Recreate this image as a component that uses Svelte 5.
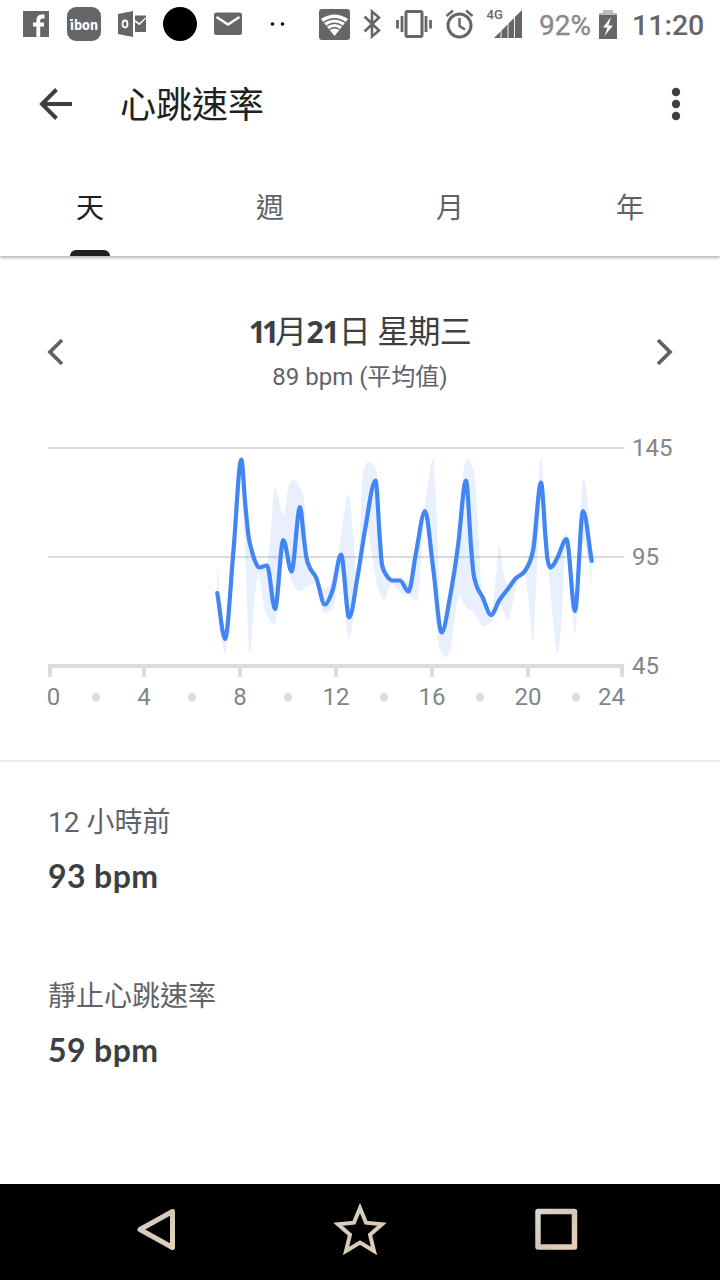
<script>
  const tabs = ['天', '週', '月', '年'];
  const stats = [
    { label: '12 小時前', value: '93 bpm' },
    { label: '靜止心跳速率', value: '59 bpm' }
  ];
  const gridlines = [{ y: 18, label: '145' }, { y: 127, label: '95' }];
  const ticks = [
    { x: 50, tx: 53.5, label: '0' }, { x: 144, tx: 144, label: '4' },
    { x: 240, tx: 240, label: '8' }, { x: 336, tx: 336, label: '12' },
    { x: 432, tx: 432, label: '16' }, { x: 528, tx: 528, label: '20' },
    { x: 622, tx: 611.5, label: '24' }
  ];
  const dots = [96, 192, 288, 384, 480, 576];

  const line = [
    [217.3, 593], [225, 639], [233.5, 550], [241.3, 459.5], [245.3, 505], [248.5, 536], [251.7, 550.5], [255, 561],
    [259, 567.5], [267, 565.5], [275, 609], [283.3, 540], [291.5, 571.5], [300, 507], [304.2, 541], [306.5, 558],
    [309.5, 567], [316.3, 578], [324.7, 604.5], [333, 589], [341, 554.5], [349.2, 617.5], [357.5, 577], [365.5, 527],
    [375.5, 480.5], [379.8, 538], [382, 565], [386.7, 575.7], [392.5, 580.5], [400, 580.5],
    [408.5, 591.5], [416, 553], [425, 511], [433, 567], [441.7, 632.5], [450, 597], [458, 546], [466, 480.5],
    [471, 546], [473.3, 572], [476, 584], [482.5, 597], [491, 615], [499.5, 600], [507.5, 589.5], [516, 578],
    [524.5, 571.5], [533, 551], [541, 482.5], [545.7, 540], [547.5, 559.5], [550.3, 567.7], [554, 564],
    [558, 556.5], [566.5, 539], [575, 611], [583, 511], [591.7, 561]
  ];
  const upper = [
    [217, 564], [225, 635], [233.5, 550], [241.5, 458], [249, 535], [258, 566], [267, 563], [270, 540], [275, 487],
    [283.5, 515], [289, 485], [293, 480], [300, 487], [304, 500], [308, 555], [316, 576], [324.5, 589], [333, 577],
    [340, 543], [344, 515], [348.7, 494], [353, 532], [357, 570], [360, 530], [363, 474], [368, 462], [375, 467],
    [379, 490], [383, 560], [391, 578], [400, 577], [408, 582], [415, 550], [425, 504], [433, 459], [436.7, 515],
    [441.5, 628], [450, 595], [458, 540], [462, 485], [467, 459], [474, 472], [478, 525], [482, 592], [491, 613],
    [495, 587], [499.3, 546], [503, 570], [508, 586], [516, 575], [524, 569], [530, 547], [537, 493], [541, 459],
    [545, 500], [550, 565], [558, 553], [566, 533], [571, 560], [575, 605], [579, 530], [583.5, 479], [588, 505], [591.5, 555]
  ];
  const lower = [
    [217, 597], [225, 654], [233, 560], [241, 470], [245, 548], [250, 654], [254, 606], [258.5, 574], [265, 611],
    [275, 624], [280, 592], [284, 548], [290, 577], [300, 591], [308, 586], [316, 583], [324, 613], [333, 609],
    [340, 570], [349, 639], [357, 590], [366, 525], [371.7, 553], [376.7, 582], [384, 600], [392, 584], [401, 593],
    [409, 596], [417, 601], [420, 577], [425, 520], [433, 570], [436.7, 628], [441, 652], [445.5, 657], [450, 651],
    [454, 625], [459, 596], [466, 607], [474, 613], [484, 626], [491, 622], [499, 602], [503, 611], [508, 620],
    [516, 588], [524, 574], [528.5, 600], [532.7, 641], [536.7, 577], [541, 500], [546, 545], [550.7, 597],
    [558, 654], [562, 612], [566, 548], [571, 590], [575, 635], [579, 580], [583.5, 542], [587, 554], [591.5, 588]
  ];

  // Monotone cubic segments, so every extreme sits on a sample.
  function curve(pts) {
    const n = pts.length;
    const h = [], s = [];
    for (let i = 0; i < n - 1; i++) {
      h.push(pts[i + 1][0] - pts[i][0]);
      s.push((pts[i + 1][1] - pts[i][1]) / h[i]);
    }
    const m = pts.map((_, i) => {
      if (i === 0) return s[0];
      if (i === n - 1) return s[n - 2];
      if (s[i - 1] * s[i] <= 0) return 0;
      const p = (s[i - 1] * h[i] + s[i] * h[i - 1]) / (h[i - 1] + h[i]);
      return Math.sign(p) * Math.min(2 * Math.abs(s[i - 1]), 2 * Math.abs(s[i]), Math.abs(p));
    });
    let d = '';
    for (let i = 0; i < n - 1; i++) {
      const k = h[i] / 3;
      const [x0, y0] = pts[i], [x1, y1] = pts[i + 1];
      d += `C${x0 + k},${y0 + k * m[i]} ${x1 - k},${y1 - k * m[i + 1]} ${x1},${y1}`;
    }
    return d;
  }
  function reverseCurve(pts) {
    return curve(pts.map(([x, y]) => [-x, y]).reverse()).replace(/-(\d)/g, '$1');
  }
  const linePath = `M${line[0]}` + curve(line);
  const bandPath = `M${upper[0]}` + curve(upper) + `L${lower[lower.length - 1]}` + reverseCurve(lower) + 'Z';
</script>

<div class="screen">
  <header class="status">
    <div class="notices">
      <svg viewBox="0 0 48 48"><rect x="11" y="11" width="26" height="26" fill="#666"/><path fill="none" stroke="#fff" stroke-width="3.800" d="M26.300 37V20.500q0-4 4-4H32.500M21 24.500h11"/></svg>
      <svg viewBox="0 0 48 48"><rect x="7" y="7" width="34" height="34" rx="9" fill="#666"/><text x="24" y="29.500" text-anchor="middle" textLength="28" lengthAdjust="spacingAndGlyphs" class="ibon">ıbon</text><path d="M10 20h3" stroke="#fff" stroke-width="1.800"/></svg>
      <svg viewBox="0 0 48 48"><path fill="#666" d="M10 14l15-3v26l-15-3zM27 15.500h11V17l-6.500 6-4.500-3zM27 22l4.500 3.200L38 18.500V32H27z"/><ellipse cx="17" cy="24" rx="2.500" ry="3.500" fill="none" stroke="#fff" stroke-width="1.800"/></svg>
      <svg viewBox="0 0 48 48"><circle cx="24" cy="24" r="17" fill="#000"/></svg>
      <svg viewBox="0 0 48 48"><rect x="10" y="12.500" width="28" height="22.500" rx="2.500" fill="#666"/><path d="M12.500 17L24 24.500 35.500 17" fill="none" stroke="#fff" stroke-width="2.400"/></svg>
      <svg viewBox="0 0 48 48"><circle cx="20.500" cy="24" r="1.800"/><circle cx="30.500" cy="24" r="1.800"/></svg>
    </div>
    <svg class="radios" viewBox="318 0 206 48">
      <rect x="319" y="9" width="31" height="31" rx="3" fill="#666"/>
      <path d="M321 19q13.500-9 27 0L334.500 36z" fill="#fff"/>
      <path d="M323.500 22.500q11-7.500 22 0M326.500 26q8-5.500 16 0M329.500 29.500q5-3.500 10 0" fill="none" stroke="#666" stroke-width="1.400"/>
      <path d="M364.500 16.500l14.500 14-7 6V11.500l7 6-14.500 14" fill="none" stroke="#666" stroke-width="2.600"/>
      <rect x="406" y="11.500" width="16" height="25" rx="1.500" fill="none" stroke="#666" stroke-width="3"/>
      <path d="M397.500 20v8.500M402 16v16M426 16v16M430.500 20v8.500" stroke="#666" stroke-width="2.800"/>
      <circle cx="459.500" cy="25.500" r="11.500" fill="none" stroke="#666" stroke-width="3"/>
      <path d="M459.500 18v8l5.500 3.500M446.500 16l6.500-5.500M466 10.500l6.500 5.500" fill="none" stroke="#666" stroke-width="2.400"/>
      <path d="M522 10v28h-28z" fill="#666"/><path d="M501 27v11M508 20v18M514.500 14v24" stroke="#fff" stroke-width=".9"/>
      <text x="486.500" y="18.500" class="net">4G</text>
    </svg>
    <span class="pct">92%</span>
    <svg class="battery" viewBox="0 0 20 30"><path fill="#bbb" d="M5 0h10v3h4v3H1V3h4z"/><path fill="#666" d="M1 5h18v24H1z"/><path fill="#fff" d="M13 7L5 17.500h4.500L6.500 26 15 15.500h-4.500z"/></svg>
    <span class="clock">11:20</span>
  </header>

  <div class="top">
    <div class="appbar">
      <svg class="back" viewBox="0 0 48 48"><path d="M40 24H11M24.500 9.500L10 24l14.500 14.500" fill="none" stroke="#3c4043" stroke-width="4"/></svg>
      <h1>心跳速率</h1>
      <svg class="more" viewBox="0 0 48 48" fill="#3c4043"><circle cx="24" cy="12" r="4.200"/><circle cx="24" cy="24" r="4.200"/><circle cx="24" cy="36" r="4.200"/></svg>
    </div>
    <nav>
      {#each tabs as tab, i}
        <div class="tab" class:active={i === 0}><span>{tab}</span></div>
      {/each}
    </nav>
  </div>

  <main>
    <section class="day">
      <svg class="chev" viewBox="0 0 48 48"><path d="M30 12L18 24l12 12" fill="none" stroke="#5f6368" stroke-width="3.800"/></svg>
      <div class="date">
        <h2><b class="month">11</b>月<b>21</b>日 星期三</h2>
        <p>89 bpm (平均值)</p>
      </div>
      <svg class="chev" viewBox="0 0 48 48"><path d="M18 12l12 12-12 12" fill="none" stroke="#5f6368" stroke-width="3.800"/></svg>
    </section>

    <svg class="chart" viewBox="0 0 720 290">
      <g transform="translate(0 -430)"><path d={bandPath} fill="#e8f0fe"/></g>
      {#each gridlines as g}
        <path d="M48 {g.y}H624" stroke="#5f6368" stroke-opacity=".23" stroke-width="2"/>
        <text x="632" y={g.y + 8}>{g.label}</text>
      {/each}
      <text x="632" y="244">45</text>
      <path d="M48 236H624" stroke="#dadce0" stroke-width="4"/>
      {#each ticks as t}
        <path d="M{t.x} 236v11" stroke="#dadce0" stroke-width="4"/>
        <text x={t.tx} y="275" text-anchor="middle">{t.label}</text>
      {/each}
      {#each dots as x}<circle cx={x} cy="267.300" r="4" fill="#dadce0"/>{/each}
      <g transform="translate(0 -430)"><path d={linePath} fill="none" stroke="#4285f4" stroke-width="4.200" stroke-linecap="round" stroke-linejoin="round"/></g>
    </svg>

    <section class="stats">
      {#each stats as s}
        <div class="stat">
          <div class="label">{s.label}</div>
          <div class="value">{s.value}</div>
        </div>
      {/each}
    </section>
  </main>

  <footer>
    <svg viewBox="0 0 720 96">
      <defs><linearGradient id="metal" x1="0" y1="0" x2="1" y2="1"><stop offset="0" stop-color="#d9d6d2"/><stop offset=".5" stop-color="#d5c8b6"/><stop offset="1" stop-color="#e5d2b8"/></linearGradient></defs>
      <g fill="none" stroke="url(#metal)" stroke-linejoin="round">
        <path d="M140 45.500L172.500 27.500V63.500z" stroke-width="5"/>
        <path d="M360 24L366 38.700 382 40.200 370 50.800 374 67 360 58.500 346 67 350 50.800 338 40.200 354 38.700z" stroke-width="4" stroke-linejoin="miter"/>
        <rect x="538" y="27.500" width="36.500" height="35.500" stroke-width="5.500"/>
      </g>
    </svg>
  </footer>
</div>

<style>
  :global(body) { margin: 0; background: #fff; }
  .screen {
    width: 720px; height: 1280px; display: flex; flex-direction: column; overflow: hidden;
    background: #fff; color: #3c4043; font-family: Roboto, "Noto Sans CJK TC", sans-serif;
  }
  svg { display: block; flex: none; }
  h1, h2, p { margin: 0; font-weight: 400; }
  .status { height: 48px; display: flex; align-items: center; flex: none; }
  .notices { display: flex; width: 306px; padding-left: 12px; box-sizing: content-box; }
  .notices svg { width: 48px; height: 48px; }
  .ibon { font: 700 14px "DejaVu Sans", sans-serif; fill: #fff; }
  .radios { width: 206px; height: 48px; }
  .net { font: 500 13px Roboto, sans-serif; fill: #666; }
  .pct { width: 74px; padding-left: 15px; box-sizing: border-box; font-size: 28px; line-height: 48px; color: #8a8a8a; margin-top: 3px; -webkit-text-stroke: .4px #8a8a8a; }
  .battery { width: 20px; height: 30px; margin-top: 1px; }
  .clock { padding-left: 14px; font-size: 28.500px; font-weight: 500; line-height: 48px; color: #666; margin-top: 3px; }
  .top { height: 208px; flex: none; display: flex; flex-direction: column; box-shadow: 0 1px 4px rgba(0, 0, 0, .42); clip-path: inset(0 0 -10px 0); }
  .appbar { height: 112px; display: flex; align-items: center; padding: 0 20px 0 32px; }
  .back, .more { width: 48px; height: 48px; }
  .appbar h1 { flex: 1; margin-left: 40px; font-size: 36px; line-height: 48px; color: #202124; margin-top: 3px; }
  nav { height: 96px; display: grid; grid-template-columns: repeat(4, 1fr); }
  .tab { display: flex; flex-direction: column; align-items: center; justify-content: space-between; font-size: 28px; line-height: 98px; color: #5f6368; }
  .tab span { height: 90px; }
  .active { color: #202124; }
  .active::after { content: ""; width: 40px; height: 6px; border-radius: 6px 6px 0 0; background: #202124; }
  main { flex: 1; display: flex; flex-direction: column; }
  .day { height: 174px; display: flex; justify-content: space-between; align-items: center; padding: 0 32px; box-sizing: border-box; }
  .chev { width: 48px; height: 48px; margin-top: 18px; }
  .date { text-align: center; padding-top: 19px; }
  .date h2 { font-size: 32px; line-height: 48px; letter-spacing: -.7px; }
  .date b { font-family: "Open Sans", sans-serif; font-size: 30px; line-height: 1; font-weight: 700; letter-spacing: -1px; }
  .date .month { letter-spacing: -4px; }
  .date p { font-size: 24px; line-height: 42px; color: #5f6368; }
  .chart { width: 720px; height: 290px; }
  .chart text { font: 24px Roboto, sans-serif; fill: #80868b; }
  .stats { margin-top: 40px; border-top: 2px solid #e8eaed; padding: 39px 48px 0; display: flex; flex-direction: column; gap: 64px; }
  .label { font-size: 28px; line-height: 44px; color: #5f6368; }
  .value { font: 700 32px/66px Lato, sans-serif; color: #3c4043; letter-spacing: .4px; margin-top: -2px; margin-bottom: 2px; }
  footer { height: 96px; background: #000; flex: none; }
  footer svg { width: 720px; height: 96px; }
</style>
